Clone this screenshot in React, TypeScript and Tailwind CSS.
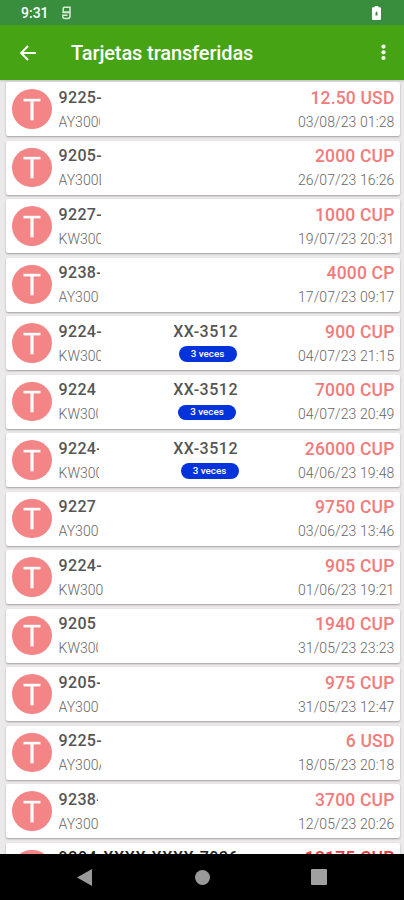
type Row = {
  card: string;
  clip: string;
  id: string;
  idClip: string;
  amount: string;
  date: string;
  ref?: string;
  pill?: string;
};

const rows: Row[] = [
  { card: '9225-', clip: 'w-[43px]', id: 'AY3000', idClip: 'w-[41.5px]', amount: '12.50 USD', date: '03/08/23 01:28' },
  { card: '9205-', clip: 'w-[44px]', id: 'AY300D', idClip: 'w-[42.5px]', amount: '2000 CUP', date: '26/07/23 16:26' },
  { card: '9227-', clip: 'w-[42.5px]', id: 'KW300', idClip: 'w-[42px]', amount: '1000 CUP', date: '19/07/23 20:31' },
  { card: '9238-', clip: 'w-[41.5px]', id: 'AY300', idClip: 'w-[44px]', amount: '4000 CP', date: '17/07/23 09:17' },
  { card: '9224-', clip: 'w-[44px]', id: 'KW300', idClip: 'w-[42.5px]', amount: '900 CUP', date: '04/07/23 21:15', ref: 'XX-3512', pill: 'mr-[1.5px]' },
  { card: '9224', clip: 'w-[44px]', id: 'KW300', idClip: 'w-[39.5px]', amount: '7000 CUP', date: '04/07/23 20:49', ref: 'XX-3512', pill: 'mr-[2px]' },
  { card: '9224-', clip: 'w-[40.5px]', id: 'KW300', idClip: 'w-[40.5px]', amount: '26000 CUP', date: '04/06/23 19:48', ref: 'XX-3512', pill: '-mr-[0.5px]' },
  { card: '9227', clip: 'w-[44px]', id: 'AY300', idClip: 'w-[44px]', amount: '9750 CUP', date: '03/06/23 13:46' },
  { card: '9224-', clip: 'w-[46px]', id: 'KW300', idClip: 'w-[46px]', amount: '905 CUP', date: '01/06/23 19:21' },
  { card: '9205', clip: 'w-[44px]', id: 'KW300', idClip: 'w-[39.5px]', amount: '1940 CUP', date: '31/05/23 23:23' },
  { card: '9205-', clip: 'w-[41.5px]', id: 'AY300', idClip: 'w-[44px]', amount: '975 CUP', date: '31/05/23 12:47' },
  { card: '9225-', clip: 'w-[44px]', id: 'AY300A', idClip: 'w-[42.5px]', amount: '6 USD', date: '18/05/23 20:18' },
  { card: '9238-', clip: 'w-[39.5px]', id: 'AY300', idClip: 'w-[44px]', amount: '3700 CUP', date: '12/05/23 20:26' },
  { card: '9204-XXXX-XXXX-7036', clip: 'w-[190px]', id: 'AY300', idClip: 'w-[44px]', amount: '12175 CUP', date: '11/05/23 18:02' },
];

function TransferCard({ row, last }: { row: Row; last: boolean }) {
  return (
    <li className="flex h-[54px] shrink-0 items-start rounded-[2px] bg-white pr-[5.5px] pl-[6px] shadow-[0_1px_2px_rgba(0,0,0,0.32)]">
      <div className="mt-[7px] flex size-[39.5px] shrink-0 items-center justify-center rounded-full bg-[#f48586]">
        <svg viewBox="0 0 18 24" className="h-[24px] w-[18px]" fill="none" stroke="#fff">
          <path d="M.500 3.100h17" strokeWidth="2.600" />
          <path d="M9 3.300v20" strokeWidth="3.200" />
        </svg>
      </div>
      <div className="ml-[7px] w-[106px] shrink-0 whitespace-nowrap">
        <div className={`overflow-hidden pt-[5.5px] text-[16px] leading-[20px] font-medium ${last ? 'tracking-[0.6px] text-[#222]' : 'tracking-[0.35px] text-[#555]'} ${row.clip}`}>{row.card}</div>
        <div className={`mt-[5px] overflow-hidden text-[14px] leading-[18px] font-light tracking-[0.05px] text-[#666] ${row.idClip}`}>{row.id}</div>
      </div>
      {row.ref && (
        <div className="ml-[7.500px] flex w-[66px] shrink-0 flex-col items-end pt-[5.5px] text-[16px] leading-[20px] font-medium text-[#555]">
          <span className="whitespace-nowrap tracking-[0.5px]">{row.ref}</span>
          <span className={`mt-[4.500px] flex h-[15.5px] w-[58px] items-center justify-center rounded-full bg-[#0433dc] text-[9.8px] leading-none font-medium text-white ${row.pill}`}>3 veces</span>
        </div>
      )}
      <div className="ml-auto shrink-0 text-right whitespace-nowrap">
        <div className={`pt-[5.5px] text-[17.5px] leading-[20px] font-medium tracking-[0.18px] ${last ? 'text-[#e63a40]' : 'text-[#f27b7b]'}`}>{row.amount}</div>
        <div className="mt-[5px] text-[14px] leading-[18px] font-light tracking-[0.1px] text-[#666]">{row.date}</div>
      </div>
    </li>
  );
}

export default function App() {
  return (
    <div className="flex h-[900px] w-[404px] flex-col overflow-hidden bg-[#ebe9ea] font-[Roboto,sans-serif]">
      <div className="flex h-[25px] shrink-0 items-center bg-[#388e3c] pr-[23.5px] pl-[21px] text-white">
        <span className="text-[14px] leading-none font-medium">9:31</span>
        <svg viewBox="0 0 11 14" className="ml-[12.5px] h-[14px] w-[11px]" fill="none" stroke="#d8ecd8" strokeWidth="1.500">
          <path d="M2.200 6V2.500Q2.200 1.300 3.400 1.300H9V6H2.200M1.300 6.500H9V10.300Q9 12.500 6.800 12.500H4Q1.800 12.500 1.800 10.300V9.200H6.500" />
        </svg>
        <svg viewBox="0 0 9 14" className="ml-auto h-[14px] w-[9px]">
          <path fill="#fff" d="M2.600 1.200V0h3.800v1.200H8q1 0 1 1V13q0 1-1 1H1q-1 0-1-1V2.200q0-1 1-1z" />
          <path fill="#388e3c" d="M4.500 5.200 5.500 7v2.600h-2V7z" />
        </svg>
      </div>
      <header className="z-10 flex h-[55px] shrink-0 items-center bg-[#45a314] pr-[18.500px] pl-[20px] text-white shadow-[0_1px_2px_rgba(0,0,0,0.2)]">
        <svg viewBox="0 0 16 16" className="h-[16px] w-[16px]" fill="none" stroke="#fff" strokeWidth="1.900">
          <path d="M16 8H1.500M8 1 1.200 8 8 15" />
        </svg>
        <h1 className="ml-[35px] text-[20px] leading-none font-medium tracking-[-0.12px] whitespace-nowrap">Tarjetas transferidas</h1>
        <svg viewBox="0 0 5 17" className="ml-auto h-[17px] w-[5px]" fill="#fff">
          <circle cx="2.500" cy="2.600" r="2.100" />
          <circle cx="2.500" cy="8.300" r="2.100" />
          <circle cx="2.500" cy="14" r="2.100" />
        </svg>
      </header>
      <ul className="flex h-[774px] min-h-0 flex-1 flex-col gap-[4.5px] overflow-hidden pt-[2px] pr-[4px] pl-[6px]">
        {rows.map((row, i) => (
          <TransferCard key={row.date} row={row} last={i === rows.length - 1} />
        ))}
      </ul>
      <nav className="flex h-[46px] shrink-0 items-center bg-black pl-[77px]">
        <svg viewBox="0 0 15 17" className="h-[17px] w-[15px]" fill="#999">
          <path d="M15 0v17L0 8.500z" />
        </svg>
        <div className="ml-[103px] size-[15px] rounded-full bg-[#999]" />
        <div className="ml-[101px] size-[16px] rounded-[1px] bg-[#a0a0a0]" />
      </nav>
    </div>
  );
}
